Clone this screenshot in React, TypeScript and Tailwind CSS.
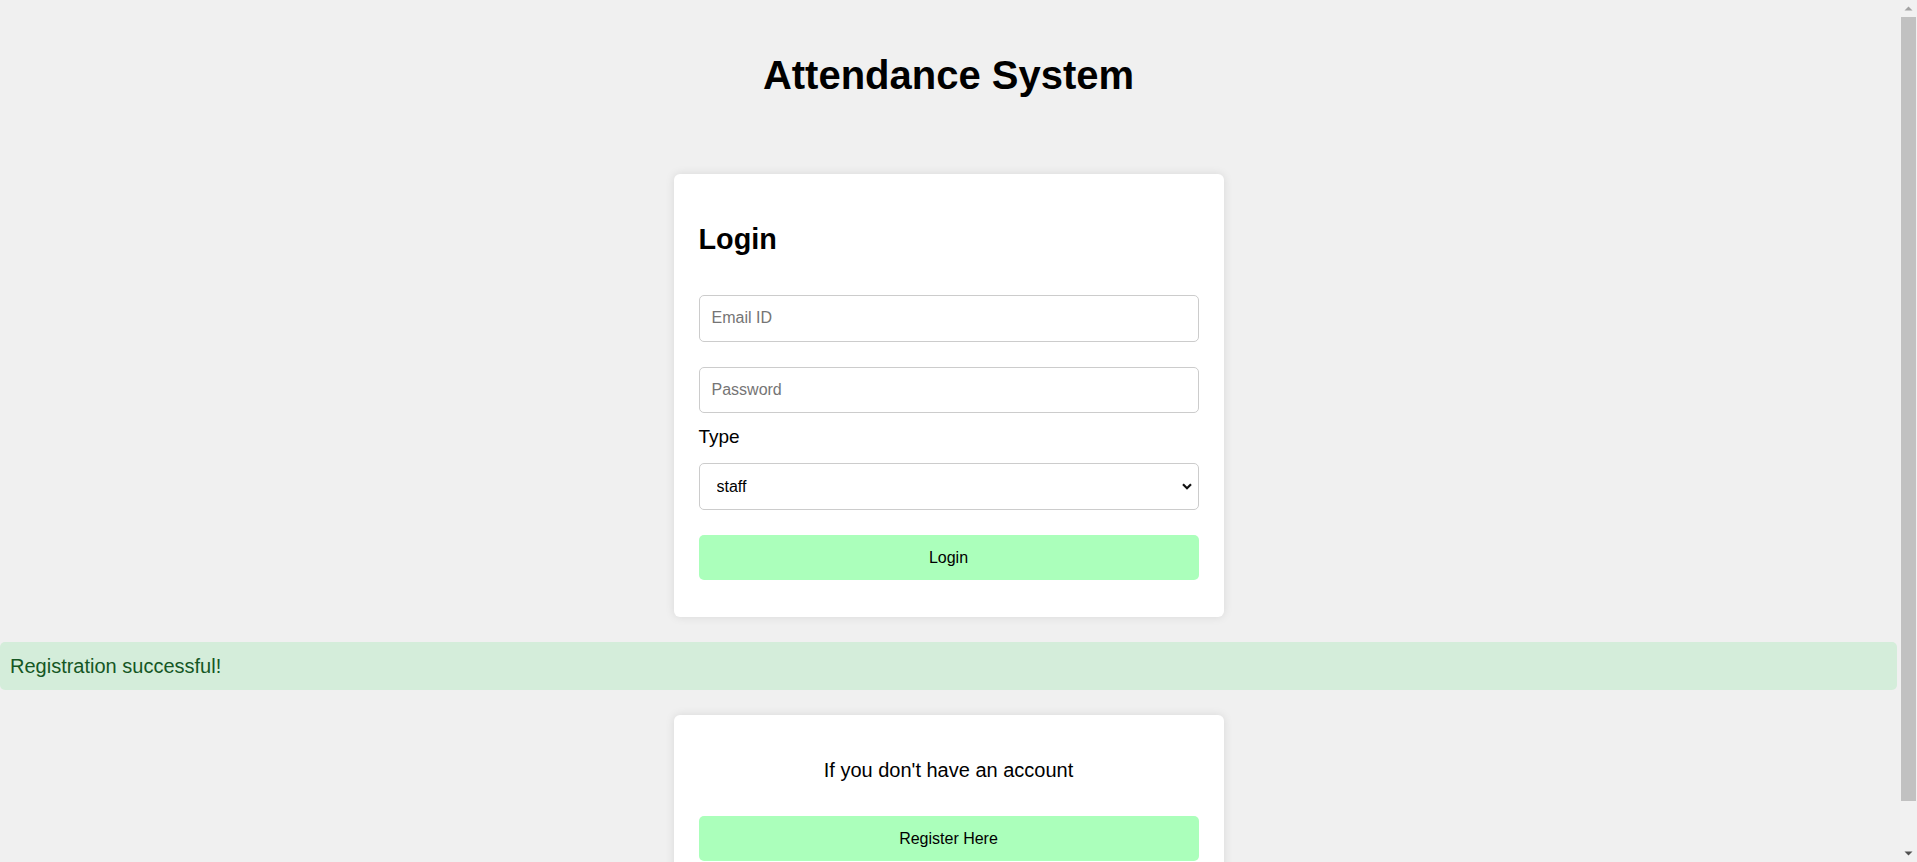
import React from "react";

function FakeScrollbar() {
  return (
    <div className="fixed top-0 right-0 flex h-[862px] w-[17px] flex-col bg-[#f1f1f1]">
      <div className="flex h-[17px] items-center justify-center">
        <svg width="9" height="5" viewBox="0 0 9 5">
          <polygon points="0.5,4.5 4.5,0.5 8.5,4.5" fill="#a3a3a3" />
        </svg>
      </div>
      <div className="flex-1 px-[1px] pb-[44px]">
        <div className="h-full w-full bg-[#c1c1c1]" />
      </div>
      <div className="flex h-[17px] items-center justify-center">
        <svg width="9" height="5" viewBox="0 0 9 5">
          <polygon points="0.5,0.5 8.5,0.5 4.5,4.5" fill="#505050" />
        </svg>
      </div>
    </div>
  );
}

export default function App() {
  return (
    <div className="min-h-[906px] bg-[#f0f0f0] text-black font-['Liberation_Sans',Arial,sans-serif]">
      <div className="w-[1897px] pt-[52px] pb-[20px]">
        <h1 className="text-center text-[40px] leading-[46px] font-bold">Attendance System</h1>

        <div className="mx-auto mt-[76px] w-[550px] rounded-[6px] bg-white px-[25px] pt-[25px] pb-[37px] shadow-[0_0_10px_rgba(0,0,0,0.1)]">
          <h2 className="mt-[24px] text-[28.8px] leading-[32px] font-bold">Login</h2>
          <input
            type="email"
            placeholder="Email ID"
            className="mt-[40px] block h-[47px] w-full rounded-[5px] border border-[#cccccc] bg-white px-[12px] pb-[1px] text-[16px] outline-none placeholder:text-[#757575]"
          />
          <input
            type="password"
            placeholder="Password"
            className="mt-[25px] block h-[46px] w-full rounded-[5px] border border-[#cccccc] bg-white px-[12px] pb-[1px] text-[16px] outline-none placeholder:text-[#757575]"
          />
          <label className="mt-[12px] block text-[19px] leading-[23px]">Type</label>
          <div className="relative mt-[15px]">
            <select
              defaultValue="staff"
              className="block h-[47px] w-full appearance-none rounded-[5px] border border-[#cccccc] bg-white pl-[17px] pr-[30px] text-[16px] outline-none"
            >
              <option value="staff">staff</option>
              <option value="student">student</option>
            </select>
            <svg
              className="pointer-events-none absolute top-[20px] right-[7px]"
              width="10"
              height="7"
              viewBox="0 0 10 7"
            >
              <polyline points="1,1.2 5,5.2 9,1.2" fill="none" stroke="#111" strokeWidth="2.2" />
            </svg>
          </div>
          <button className="mt-[25px] block h-[45px] w-full rounded-[5px] bg-[#abffbb] text-[16px] text-black">
            Login
          </button>
        </div>

        <div className="mt-[25px] flex h-[48px] items-center rounded-[5px] bg-[#d4edda] px-[10px] text-[20px] text-[#155724]">
          Registration successful!
        </div>

        <div className="mx-auto mt-[25px] w-[550px] rounded-[6px] bg-white px-[25px] pt-[25px] pb-[25px] shadow-[0_0_10px_rgba(0,0,0,0.1)]">
          <p className="mt-[19px] text-center text-[20px] leading-[23px]">If you don't have an account</p>
          <button className="mt-[34px] block h-[45px] w-full rounded-[5px] bg-[#abffbb] text-[16px] text-black">
            Register Here
          </button>
        </div>
      </div>
      <FakeScrollbar />
    </div>
  );
}
